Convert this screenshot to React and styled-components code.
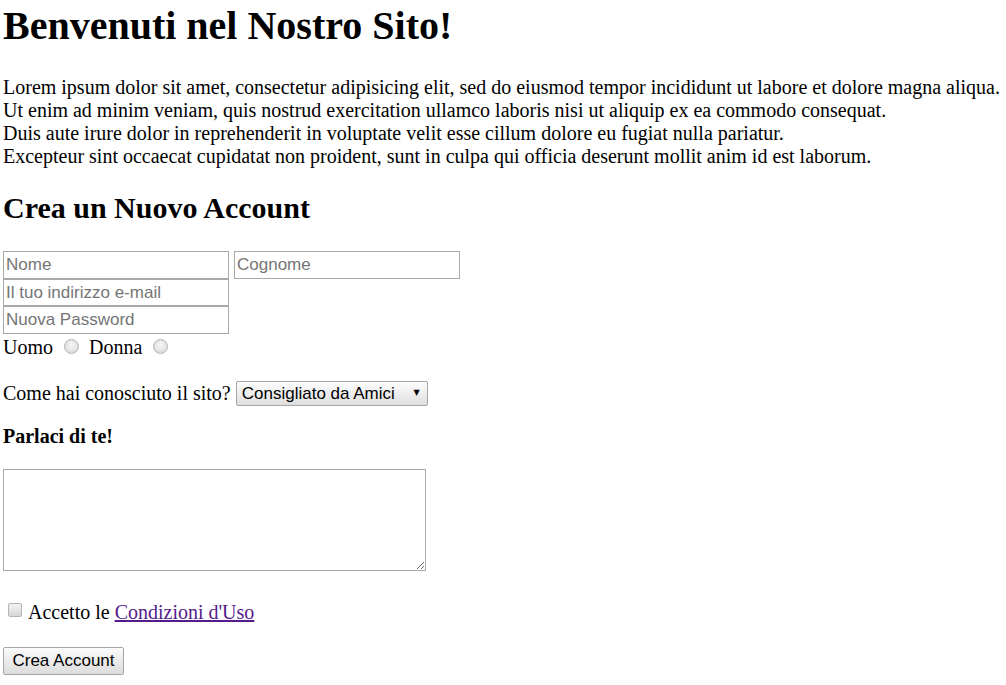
import React from 'react';
import styled, { createGlobalStyle } from 'styled-components';

const GlobalStyle = createGlobalStyle`
	html, body {
		margin: 0;
		padding: 0;
		background: #fff;
	}
	body {
		font-family: 'Liberation Serif', 'Times New Roman', serif;
		font-size: 20px;
		color: #000;
	}
`;

const Page = styled.div`
	padding: 3px 3px 0;
`;

const Title = styled.h1`
	font-size: 40px;
	font-weight: bold;
	margin: 0 0 27px;
	line-height: 46px;
`;

const Intro = styled.p`
	margin: 0 0 22px;
	line-height: 23px;
`;

const Line = styled.span`
	display: block;
	white-space: nowrap;
`;

const Subtitle = styled.h2`
	font-size: 30px;
	font-weight: bold;
	margin: 0 0 26px;
	line-height: 35px;
`;

const Form = styled.form`
	display: flex;
	flex-direction: column;
	align-items: flex-start;
`;

const FieldRow = styled.div`
	display: flex;
	gap: 5px;
`;

const TextInput = styled.input`
	box-sizing: border-box;
	width: 226px;
	height: ${(p) => p.$h || 27}px;
	border: 1px solid #a9a9a9;
	padding: 1px 2px;
	margin: 0;
	font-family: 'Liberation Sans', Arial, sans-serif;
	font-size: 17px;
	color: #000;
	background: #fff;
	outline: none;
	&::placeholder {
		color: #757575;
	}
`;

const Line20 = styled.div`
	display: flex;
	align-items: center;
	line-height: 23px;
	margin-top: ${(p) => p.$mt || 0}px;
`;

const Radio = styled.input`
	appearance: none;
	box-sizing: border-box;
	width: 15px;
	height: 15px;
	margin: -2px 10px 0 11px;
	border-radius: 50%;
	border: 1px solid #b4b4b4;
	background: radial-gradient(circle at 50% 40%, #f6f6f6 0%, #e4e4e4 55%, #d0d0d0 100%);
`;

const SelectWrap = styled.span`
	position: relative;
	display: inline-flex;
	margin-left: 5px;
`;

const Select = styled.select`
	appearance: none;
	box-sizing: border-box;
	width: 192px;
	height: 25px;
	padding: 0 20px 0 5px;
	margin: 0;
	font-family: 'Liberation Sans', Arial, sans-serif;
	font-size: 17px;
	color: #000;
	border: 1px solid #a6a6a6;
	border-radius: 2px;
	background: linear-gradient(#fdfdfd, #dedede);
	outline: none;
`;

const Caret = styled.span`
	position: absolute;
	right: 8px;
	top: 7px;
	font-size: 8px;
	line-height: 10px;
	pointer-events: none;
	font-family: 'DejaVu Sans', sans-serif;
`;

const Label = styled.div`
	font-weight: bold;
	line-height: 23px;
	margin-top: 19px;
`;

const TextArea = styled.textarea`
	box-sizing: border-box;
	width: 423px;
	height: 102px;
	margin: 21px 0 0;
	border: 1px solid #a9a9a9;
	padding: 2px;
	font-family: 'Liberation Mono', monospace;
	font-size: 13px;
	outline: none;
`;

const Check = styled.input`
	appearance: none;
	box-sizing: border-box;
	width: 14px;
	height: 14px;
	margin: -6px 6px 0 5px;
	border-radius: 2px;
	border: 1px solid #b4b4b4;
	background: linear-gradient(#f2f2f2, #d8d8d8);
`;

const TermsLink = styled.a`
	color: #551a8b;
	text-decoration: underline;
	margin-left: 5px;
`;

const Submit = styled.button`
	box-sizing: border-box;
	width: 121px;
	height: 28px;
	margin-top: 23px;
	padding: 0;
	font-family: 'Liberation Sans', Arial, sans-serif;
	font-size: 17px;
	color: #000;
	border: 1px solid #a6a6a6;
	border-radius: 2px;
	background: linear-gradient(#fbfbfb, #dcdcdc);
`;

const App = () => {
	return (
		<>
			<GlobalStyle />
			<Page>
				<Title>Benvenuti nel Nostro Sito!</Title>
				<Intro>
					<Line>
						Lorem ipsum dolor sit amet, consectetur adipisicing elit, sed do eiusmod tempor incididunt ut labore et dolore magna aliqua.
					</Line>
					<Line>Ut enim ad minim veniam, quis nostrud exercitation ullamco laboris nisi ut aliquip ex ea commodo consequat.</Line>
					<Line>Duis aute irure dolor in reprehenderit in voluptate velit esse cillum dolore eu fugiat nulla pariatur.</Line>
					<Line>Excepteur sint occaecat cupidatat non proident, sunt in culpa qui officia deserunt mollit anim id est laborum.</Line>
				</Intro>
				<Subtitle>Crea un Nuovo Account</Subtitle>
				<Form onSubmit={(e) => e.preventDefault()}>
					<FieldRow>
						<TextInput $h={28} placeholder='Nome' />
						<TextInput $h={28} placeholder='Cognome' />
					</FieldRow>
					<TextInput placeholder='Il tuo indirizzo e-mail' />
					<TextInput $h={28} placeholder='Nuova Password' />
					<Line20 $mt={2}>
						Uomo
						<Radio type='radio' name='sesso' />
						Donna
						<Radio type='radio' name='sesso' />
					</Line20>
					<Line20 $mt={22}>
						Come hai conosciuto il sito?
						<SelectWrap>
							<Select defaultValue='amici'>
								<option value='amici'>Consigliato da Amici</option>
								<option value='google'>Google</option>
								<option value='altro'>Altro</option>
							</Select>
							<Caret>▼</Caret>
						</SelectWrap>
					</Line20>
					<Label>Parlaci di te!</Label>
					<TextArea />
					<Line20 $mt={30}>
						<Check type='checkbox' />
						Accetto le
						<TermsLink href='#'>Condizioni d'Uso</TermsLink>
					</Line20>
					<Submit type='submit'>Crea Account</Submit>
				</Form>
			</Page>
		</>
	);
};

export default App;
